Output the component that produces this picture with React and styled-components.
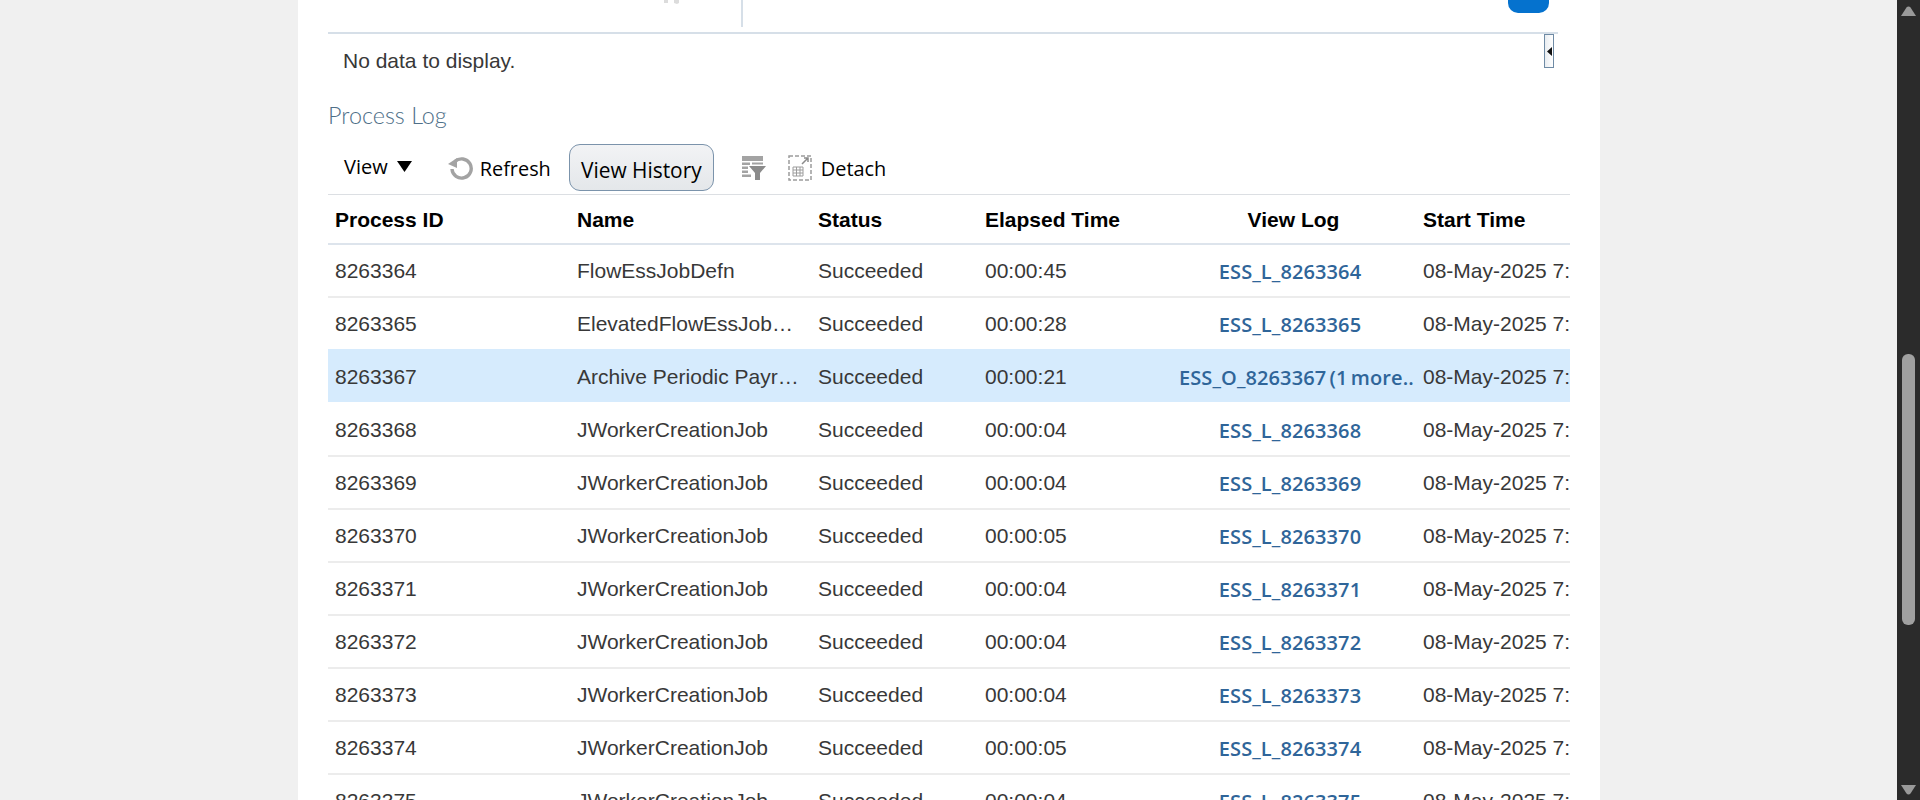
import styled, { createGlobalStyle } from "styled-components";

const GlobalStyle = createGlobalStyle`
  html, body {
    margin: 0;
    height: 100%;
    overflow: hidden;
    background: #f0f0f0;
  }
`;

const Shell = styled.div`
  display: flex;
  height: 800px;
  width: 1920px;
  overflow: hidden;
`;

const PageArea = styled.div`
  flex: 1;
  min-width: 0;
  padding-left: 298px;
`;

const Panel = styled.main`
  width: 1302px;
  height: 800px;
  background: #fff;
  padding-left: 30px;
  box-sizing: border-box;
  font-family: "Liberation Sans", Arial, sans-serif;
  color: #333;
`;

const Scrollbar = styled.div`
  width: 23px;
  background: #2b2b2b;
  display: flex;
  flex-direction: column;
  align-items: center;
  padding: 6px 0 5px;
  box-sizing: border-box;
`;

const ScrollTrack = styled.div`
  flex: 1;
  width: 100%;
  padding-top: 338px;
  box-sizing: border-box;
  display: flex;
  justify-content: center;
`;

const ScrollThumb = styled.div`
  width: 13px;
  height: 271px;
  background: #a0a0a0;
  border-radius: 6px;
`;

const TopStrip = styled.div`
  width: 1230px;
  height: 32px;
  border-bottom: 2px solid #d6dfe8;
  display: flex;
  position: relative;
`;

const TopLeft = styled.div`
  width: 415px;
  height: 27px;
  border-right: 2px solid #d6dfe8;
  overflow: hidden;
  display: flex;
  justify-content: flex-end;
  padding-right: 61px;
  box-sizing: border-box;
`;

const TopRight = styled.div`
  flex: 1;
  display: flex;
  justify-content: flex-end;
  padding-right: 9px;
  overflow: hidden;
  height: 14px;
`;

const BlueButton = styled.div`
  width: 41px;
  height: 40px;
  margin-top: -27px;
  background: #0572ce;
  border-radius: 0 0 10px 10px;
`;

const SplitHandle = styled.div`
  position: absolute;
  right: 4px;
  top: 34px;
  width: 8px;
  height: 32px;
  border: 1px solid #6f8ba5;
  background: linear-gradient(90deg, #e9edf1, #fff);
  display: flex;
  align-items: center;
  justify-content: center;
`;

const NoData = styled.p`
  margin: 0;
  height: 66px;
  padding-left: 15px;
  font-size: 21px;
  line-height: 53px;
  color: #383838;
`;

const SectionTitle = styled.h2`
  margin: 0;
  height: 44px;
  font-family: Lato, "Open Sans", sans-serif;
  font-weight: 300;
  font-size: 23.4px;
  line-height: 30px;
  color: #4f6f88;
`;

const Toolbar = styled.div`
  display: flex;
  align-items: center;
  height: 46px;
  padding: 0 0 4px 16px;
  width: 1226px;
  font-family: "Open Sans", "Noto Sans", sans-serif;
  font-size: 19.9px;
  font-weight: 500;
  color: #000;
`;

const MenuLabel = styled.span`
  display: flex;
  align-items: center;
  gap: 9px;
  margin: 0 36px 2px 0;
  font-weight: 400;
  font-size: 20px;
`;

const ToolItem = styled.span`
  display: flex;
  align-items: center;
  gap: ${(p) => p.$gap || 6}px;
  margin-top: 2px;
  margin-right: ${(p) => p.$after || 0}px;
`;

const HistoryButton = styled.button`
  width: 145px;
  height: 47px;
  margin-right: 27px;
  padding: 6px 0 0;
  border: 1px solid #7b93ab;
  border-radius: 11px;
  background: linear-gradient(#f2f3f5, #e4e7ea);
  font-family: "Open Sans", sans-serif;
  font-size: 20.9px;
  font-weight: 500;
  color: #000;
`;

const Table = styled.div`
  width: 1242px;
  overflow: hidden;
  border-top: 1px solid #dcdfe3;
`;

const columns = "242px 241px 167px 196px 242px 154px";

const HeadRow = styled.div`
  display: grid;
  grid-template-columns: ${columns};
  height: 48px;
  align-items: center;
`;

const lineColor = (p) => {
  if (p.$selected || p.$afterSelected) return "transparent";
  return p.$first ? "#dde4ec" : "#ececec";
};

const Row = styled.div`
  display: grid;
  grid-template-columns: ${columns};
  height: 53px;
  box-sizing: border-box;
  border-top: 2px solid ${lineColor};
  background: ${(p) => (p.$selected ? "#d6ebfd" : "transparent")};
  align-items: center;
`;

const HeadCell = styled.div`
  padding: ${(p) => (p.$center ? "2px 3px 0 0" : "2px 0 0 7px")};
  font-size: 21px;
  font-weight: 700;
  color: #000;
  text-align: ${(p) => (p.$center ? "center" : "left")};
`;

const Cell = styled.div`
  padding: 0 7px;
  font-size: 21px;
  color: #383838;
  white-space: nowrap;
  overflow: hidden;
  text-overflow: ellipsis;
`;

const StartCell = styled(Cell)`
  padding-right: 0;
  text-overflow: clip;
`;

const LogLink = styled.a`
  font-family: "Open Sans", "Noto Sans", sans-serif;
  font-size: 20px;
  font-weight: 600;
  letter-spacing: 0.1px;
  word-spacing: -2px;
  color: #2f6599;
  text-align: center;
  text-decoration: none;
  white-space: nowrap;
  overflow: hidden;
  margin-top: 1px;
  padding: 0 15px 0 5px;
`;

const Triangle = () => (
  <svg width="15" height="11" viewBox="0 0 15 11">
    <path d="M0 0h15L7.500 11z" fill="#000" />
  </svg>
);

const SmallArrow = () => (
  <svg width="5" height="9" viewBox="0 0 5 9">
    <path d="M5 0v9L0 4.500z" fill="#111" />
  </svg>
);

const RefreshIcon = () => (
  <svg width="26" height="26" viewBox="0 0 26 26" fill="none">
    <path d="M7 6.500A9.600 9.600 0 1 1 4 14" stroke="#a3a3a3" strokeWidth="3.400" />
    <path d="M0 9l9-6v10z" fill="#a3a3a3" />
  </svg>
);

const FilterIcon = () => (
  <svg width="26" height="24" viewBox="0 0 26 24">
    <path d="M1 0h21v5H1zM1 6.500h8v2.500H1zM11 6.500h11v2H11zM1 10.500h6v2.500H1zM1 14.500h6v2.500H1zM1 18.500h9v2.500H1z" fill="#a3a3a3" />
    <path d="M8 10h17l-6 7v7h-5v-7z" fill="#8b8b8b" />
  </svg>
);

const DetachIcon = () => (
  <svg width="24" height="26" viewBox="0 0 24 26" fill="none">
    <rect x="1" y="1" width="22" height="24" stroke="#9c9c9c" strokeWidth="1.500" strokeDasharray="4 2" />
    <path d="M14 9l6-6M16 3h4v4" stroke="#8b8b8b" strokeWidth="1.500" />
    <path d="M5 12h10v9H5zM5 15h10M5 18h10M8.500 12v9M12 12v9" stroke="#9c9c9c" />
  </svg>
);

const ClippedIcon = () => (
  <svg width="16" height="4" viewBox="0 0 16 4">
    <path d="M0 0h4v3H0zM10 0h5v3l-2 1-3-1z" fill="#dcdcdc" />
  </svg>
);

const rows = [
  ["8263364", "FlowEssJobDefn", "00:00:45", "ESS_L_8263364"],
  ["8263365", "ElevatedFlowEssJobDefn", "00:00:28", "ESS_L_8263365"],
  ["8263367", "Archive Periodic Payroll Results", "00:00:21", "ESS_O_8263367 (1 more.."],
  ["8263368", "JWorkerCreationJob", "00:00:04", "ESS_L_8263368"],
  ["8263369", "JWorkerCreationJob", "00:00:04", "ESS_L_8263369"],
  ["8263370", "JWorkerCreationJob", "00:00:05", "ESS_L_8263370"],
  ["8263371", "JWorkerCreationJob", "00:00:04", "ESS_L_8263371"],
  ["8263372", "JWorkerCreationJob", "00:00:04", "ESS_L_8263372"],
  ["8263373", "JWorkerCreationJob", "00:00:04", "ESS_L_8263373"],
  ["8263374", "JWorkerCreationJob", "00:00:05", "ESS_L_8263374"],
  ["8263375", "JWorkerCreationJob", "00:00:04", "ESS_L_8263375"],
];

const SELECTED = "8263367";

export default function App() {
  return (
    <Shell>
      <GlobalStyle />
      <PageArea>
        <Panel>
          <TopStrip>
            <TopLeft>
              <ClippedIcon />
            </TopLeft>
            <TopRight>
              <BlueButton />
            </TopRight>
            <SplitHandle>
              <SmallArrow />
            </SplitHandle>
          </TopStrip>
          <NoData>No data to display.</NoData>
          <SectionTitle>Process Log</SectionTitle>
          <Toolbar>
            <MenuLabel>
              View <Triangle />
            </MenuLabel>
            <ToolItem $after={18}>
              <RefreshIcon /> Refresh
            </ToolItem>
            <HistoryButton>View History</HistoryButton>
            <ToolItem $after={21}>
              <FilterIcon />
            </ToolItem>
            <ToolItem $gap={9}>
              <DetachIcon /> Detach
            </ToolItem>
          </Toolbar>
          <Table>
            <HeadRow>
              <HeadCell>Process ID</HeadCell>
              <HeadCell>Name</HeadCell>
              <HeadCell>Status</HeadCell>
              <HeadCell>Elapsed Time</HeadCell>
              <HeadCell $center>View Log</HeadCell>
              <HeadCell>Start Time</HeadCell>
            </HeadRow>
            {rows.map(([id, name, time, log], i) => (
              <Row
                key={id}
                $first={i === 0}
                $selected={id === SELECTED}
                $afterSelected={i > 0 && rows[i - 1][0] === SELECTED}
              >
                <Cell>{id}</Cell>
                <Cell>{name}</Cell>
                <Cell>Succeeded</Cell>
                <Cell>{time}</Cell>
                <LogLink href="#">{log}</LogLink>
                <StartCell>08-May-2025 7:15 AM</StartCell>
              </Row>
            ))}
          </Table>
        </Panel>
      </PageArea>
      <Scrollbar>
        <svg width="15" height="10" viewBox="0 0 15 10">
          <path d="M0 10 5.500 1.500a2.500 2.500 0 0 1 4 0L15 10z" fill="#9a9a9a" />
        </svg>
        <ScrollTrack>
          <ScrollThumb />
        </ScrollTrack>
        <svg width="15" height="10" viewBox="0 0 15 10">
          <path d="M0 0 5.500 8.500a2.500 2.500 0 0 0 4 0L15 0z" fill="#9a9a9a" />
        </svg>
      </Scrollbar>
    </Shell>
  );
}
